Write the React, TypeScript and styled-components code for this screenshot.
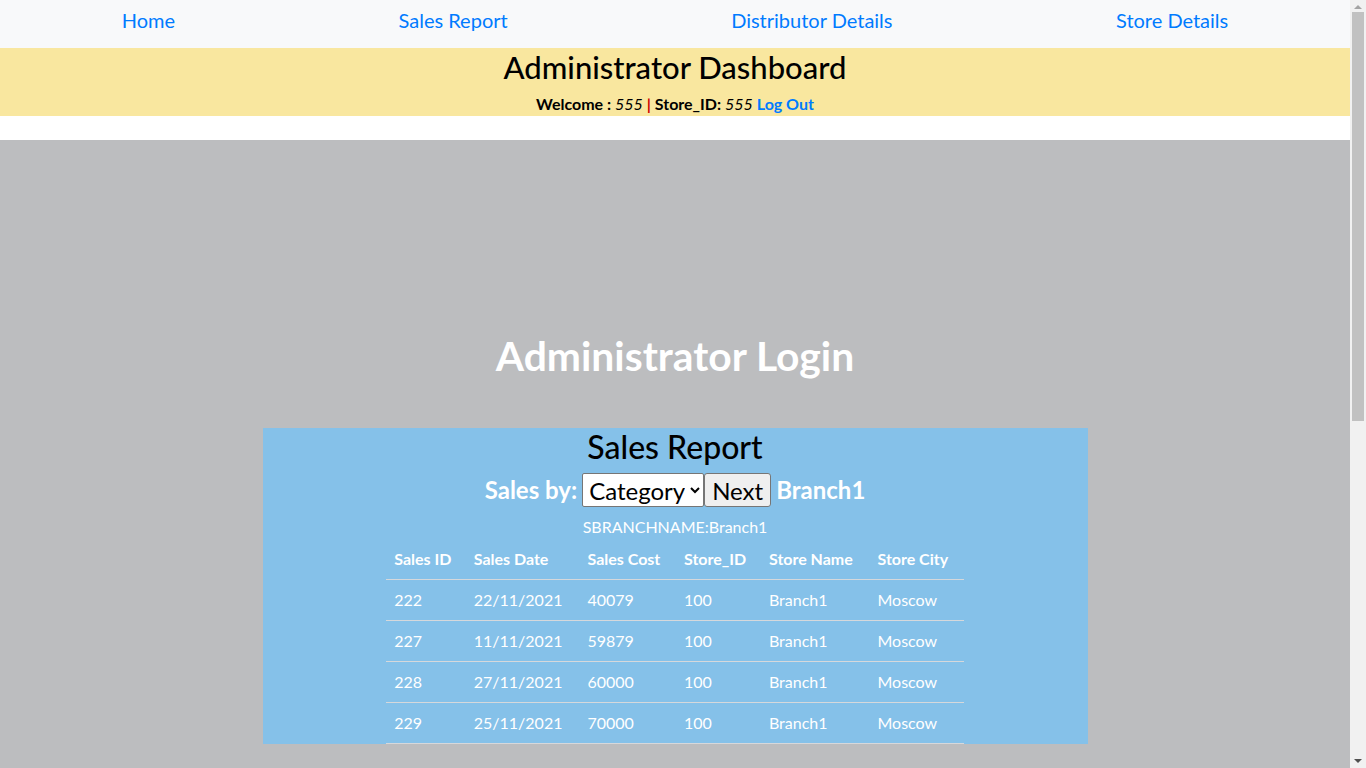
import React from "react";
import styled, { createGlobalStyle } from "styled-components";

const Global = createGlobalStyle`
  html, body { margin: 0; padding: 0; }
  body {
    font-family: Lato, "Noto Sans", sans-serif;
    font-size: 16px;
    line-height: 1.5;
    color: #212529;
    background: #f1f1f1;
  }
  * { box-sizing: border-box; }
`;

const Page = styled.div`
  width: calc(100% - 16px);
  background: #fff;
`;

const ScrollBar = styled.div`
  position: fixed;
  top: 0;
  right: 0;
  width: 16px;
  height: 100vh;
  background: #f1f1f1;
  display: flex;
  flex-direction: column;
  align-items: center;
`;

const Arrow = styled.div<{ $down?: boolean }>`
  width: 0;
  height: 0;
  margin: 5px 0;
  border-left: 4px solid transparent;
  border-right: 4px solid transparent;
  ${(p) => (p.$down ? "border-top: 4px solid #505050;" : "border-bottom: 4px solid #a3a3a3;")}
`;

const Thumb = styled.div`
  width: 12px;
  height: 409px;
  margin-top: -2px;
  background: #c1c1c1;
`;

const Fill = styled.div`
  flex: 1;
`;

const Nav = styled.nav`
  height: 48px;
  background: #f8f9fa;
  display: flex;
  align-items: flex-start;
  justify-content: space-around;
  padding: 8px 10px 0;
`;

const NavLink = styled.a`
  font-size: 20px;
  color: #007bff;
  text-decoration: none;
  line-height: 24px;
`;

const Banner = styled.header`
  background: #f9e79f;
  text-align: center;
`;

const BannerTitle = styled.h2`
  margin: 0;
  font-size: 31px;
  font-weight: 500;
  line-height: 38px;
  color: #000;
`;

const Welcome = styled.div`
  margin-top: 6px;
  font-weight: 700;
  font-size: 16px;
  line-height: 24px;
  color: #000;
`;

const Val = styled.span`
  font-style: italic;
  font-weight: 400;
`;

const Pipe = styled.span`
  color: #c00;
`;

const LogOut = styled.a`
  color: #007bff;
  text-decoration: none;
`;

const Spacer = styled.div`
  height: 24px;
  background: #fff;
`;

const Main = styled.main`
  background: #bcbdbf;
  padding: 192px 0 634px;
  display: flex;
  flex-direction: column;
  align-items: center;
`;

const LoginTitle = styled.h1`
  margin: 0 0 48px;
  font-size: 40.8px;
  font-weight: 700;
  line-height: 48px;
  color: #fff;
`;

const Panel = styled.section`
  width: 825px;
  background: #85c1e9;
  display: flex;
  flex-direction: column;
  align-items: center;
`;

const PanelTitle = styled.h2`
  margin: 0;
  font-size: 32px;
  font-weight: 500;
  line-height: 38px;
  color: #000;
`;

const SalesBy = styled.form`
  display: flex;
  align-items: center;
  height: 48px;
  font-size: 24px;
  font-weight: 700;
  color: #fff;
`;

const Label = styled.span`
  margin-right: 5px;
`;

const Select = styled.select`
  font-family: Lato, sans-serif;
  font-size: 24px;
  height: 34px;
  width: 122px;
  background: #fff;
  color: #000;
  border: 1px solid #767676;
  border-radius: 2px;
  padding: 0 2px;
`;

const Button = styled.button`
  font-family: Lato, sans-serif;
  font-size: 24px;
  height: 34px;
  padding: 0 7px;
  background: #efefef;
  color: #000;
  border: 1px solid #767676;
  border-radius: 3px;
  margin-right: 5px;
`;

const BranchLabel = styled.p`
  margin: 1px 0 0;
  color: #fff;
  font-size: 16px;
  line-height: 24px;
`;

const Table = styled.table`
  width: 70%;
  border-collapse: collapse;
  color: #fff;
  font-size: 16px;
`;

const Th = styled.th`
  text-align: left;
  font-weight: 700;
  padding: 8px;
  line-height: 24px;
  border-bottom: 1px solid #d6d8db;
`;

const Td = styled.td`
  padding: 8px;
  line-height: 24px;
  border-bottom: 1px solid #d6d8db;
`;

const rows = [
  ["222", "22/11/2021", "40079", "100", "Branch1", "Moscow"],
  ["227", "11/11/2021", "59879", "100", "Branch1", "Moscow"],
  ["228", "27/11/2021", "60000", "100", "Branch1", "Moscow"],
  ["229", "25/11/2021", "70000", "100", "Branch1", "Moscow"],
];

const headers = ["Sales ID", "Sales Date", "Sales Cost", "Store_ID", "Store Name", "Store City"];

export default function App() {
  return (
    <>
      <Global />
      <Page>
        <Nav>
          <NavLink href="#">Home</NavLink>
          <NavLink href="#">Sales Report</NavLink>
          <NavLink href="#">Distributor Details</NavLink>
          <NavLink href="#">Store Details</NavLink>
        </Nav>
        <Banner>
          <BannerTitle>Administrator Dashboard</BannerTitle>
          <Welcome>
            Welcome : <Val>555</Val> <Pipe>|</Pipe> Store_ID: <Val>555</Val>{" "}
            <LogOut href="#">Log Out</LogOut>
          </Welcome>
        </Banner>
        <Spacer />
        <Main>
          <LoginTitle>Administrator Login</LoginTitle>
          <Panel>
            <PanelTitle>Sales Report</PanelTitle>
            <SalesBy onSubmit={(e) => e.preventDefault()}>
              <Label>Sales by:</Label>
              <Select defaultValue="Category">
                <option>Category</option>
                <option>Branch</option>
              </Select>
              <Button type="submit">Next</Button>
              <span>Branch1</span>
            </SalesBy>
            <BranchLabel>SBRANCHNAME:Branch1</BranchLabel>
            <Table>
              <thead>
                <tr>
                  {headers.map((h) => (
                    <Th key={h}>{h}</Th>
                  ))}
                </tr>
              </thead>
              <tbody>
                {rows.map((r) => (
                  <tr key={r[0]}>
                    {r.map((c, i) => (
                      <Td key={i}>{c}</Td>
                    ))}
                  </tr>
                ))}
              </tbody>
            </Table>
          </Panel>
        </Main>
      </Page>
      <ScrollBar aria-hidden="true">
        <Arrow />
        <Thumb />
        <Fill />
        <Arrow $down />
      </ScrollBar>
    </>
  );
}
